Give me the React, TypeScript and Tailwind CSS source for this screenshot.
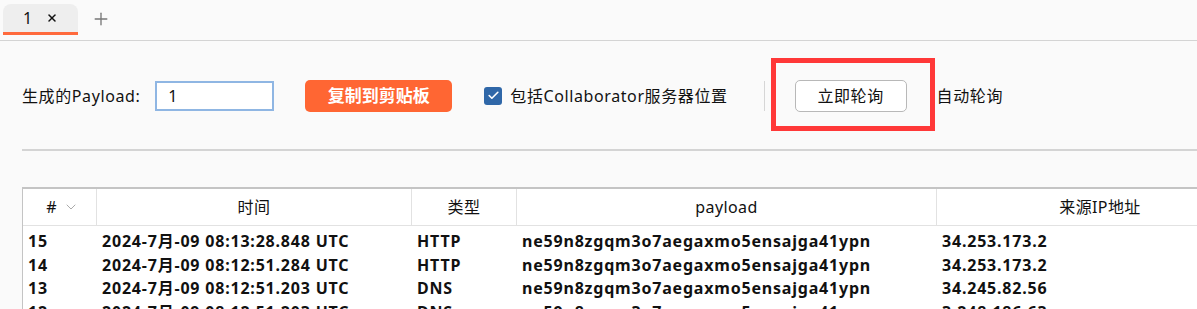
import { Check, ChevronDown, Plus, X } from 'lucide-react';

const rows = [
  { id: '15', time: '2024-7月-09 08:13:28.848 UTC', type: 'HTTP', payload: 'ne59n8zgqm3o7aegaxmo5ensajga41ypn', ip: '34.253.173.2' },
  { id: '14', time: '2024-7月-09 08:12:51.284 UTC', type: 'HTTP', payload: 'ne59n8zgqm3o7aegaxmo5ensajga41ypn', ip: '34.253.173.2' },
  { id: '13', time: '2024-7月-09 08:12:51.203 UTC', type: 'DNS', payload: 'ne59n8zgqm3o7aegaxmo5ensajga41ypn', ip: '34.245.82.56' },
  { id: '12', time: '2024-7月-09 08:12:51.203 UTC', type: 'DNS', payload: 'ne59n8zgqm3o7aegaxmo5ensajga41ypn', ip: '3.248.186.63' },
];

const font = "font-['Noto_Sans','Noto_Sans_CJK_SC',sans-serif]";

export default function App() {
  return (
    <div className={`w-[1197px] h-[309px] overflow-hidden bg-[#fafafa] text-[#111] ${font}`}>
      {/* Tab bar */}
      <div className="h-[41px] flex items-start border-b border-[#d4d4d4]">
        <div className="ml-[3px] mt-[4px] w-[75px] h-[31px] rounded-t-[8px] bg-[#eeeeee] border-b-[3px] border-[#ff6a3d] flex items-center pl-[20px] gap-[14px]">
          <span className="text-[16px] leading-none">1</span>
          <X className="w-[12px] h-[12px]" strokeWidth={3} />
        </div>
        <div className="ml-[13px] mt-[9px] text-[#777]">
          <Plus className="w-[20px] h-[20px]" strokeWidth={1.6} />
        </div>
      </div>

      {/* Controls */}
      <div className="h-[108px] flex items-center pl-[22px] pt-[1px] text-[16px] tracking-[0.6px]">
        <span>生成的Payload:</span>
        <div className="ml-[15px] w-[119px] h-[30px] border-2 border-[#8fb6e3] bg-white flex items-center pl-[11px]">
          1
        </div>
        <button className="ml-[31px] w-[147px] h-[32px] rounded-[5px] bg-[#ff6633] text-white font-bold text-[17px] tracking-normal leading-none">
          复制到剪贴板
        </button>
        <div className="ml-[32px] w-[18px] h-[18px] rounded-[3px] bg-[#2f67a8] flex items-center justify-center">
          <Check className="w-[13px] h-[13px] text-white" strokeWidth={3} />
        </div>
        <span className="ml-[8px]">包括Collaborator服务器位置</span>
        <div className="ml-[36px] w-px h-[30px] bg-[#d6d6d6]" />
        <div className="relative ml-[30px]">
          <button className="w-[112px] h-[32px] rounded-[5px] border border-[#b8b8b8] bg-white leading-none">
            立即轮询
          </button>
          <div className="absolute left-[-24px] right-[-28px] top-[-22px] bottom-[-19px] border-[5px] border-[#ff3838] pointer-events-none" />
        </div>
        <span className="ml-[30px]">自动轮询</span>
      </div>

      <div className="ml-[22px] h-[2px] bg-[#d4d4d4]" />

      {/* Table */}
      <div className="ml-[22px] mt-[36px] w-[1240px] border-t-2 border-l border-[#c4c4c4] bg-white">
        <div className="grid grid-cols-[74px_315px_105px_420px_326px] h-[37px] border-b border-[#e2e2e2] text-[16px] tracking-[0.4px]">
          <div className="flex items-center justify-center gap-[6px] border-r border-[#e2e2e2] pl-[6px]">
            <span>#</span>
            <ChevronDown className="w-[16px] h-[16px] text-[#aaa]" strokeWidth={1.5} />
          </div>
          <div className="flex items-center justify-center border-r border-[#e2e2e2]">时间</div>
          <div className="flex items-center justify-center border-r border-[#e2e2e2]">类型</div>
          <div className="flex items-center justify-center border-r border-[#e2e2e2]">payload</div>
          <div className="flex items-center justify-center">来源IP地址</div>
        </div>
        <div className="pt-[3px]">
          {rows.map((r, i) => (
            <div key={i} className="grid grid-cols-[74px_315px_105px_420px_326px] h-[23.5px] items-center text-[16px] tracking-[0.8px] font-bold whitespace-nowrap">
              <div className="pl-[5px]">{r.id}</div>
              <div className="pl-[5px]">{r.time}</div>
              <div className="pl-[5px]">{r.type}</div>
              <div className="pl-[5px]">{r.payload}</div>
              <div className="pl-[5px]">{r.ip}</div>
            </div>
          ))}
        </div>
      </div>
    </div>
  );
}
